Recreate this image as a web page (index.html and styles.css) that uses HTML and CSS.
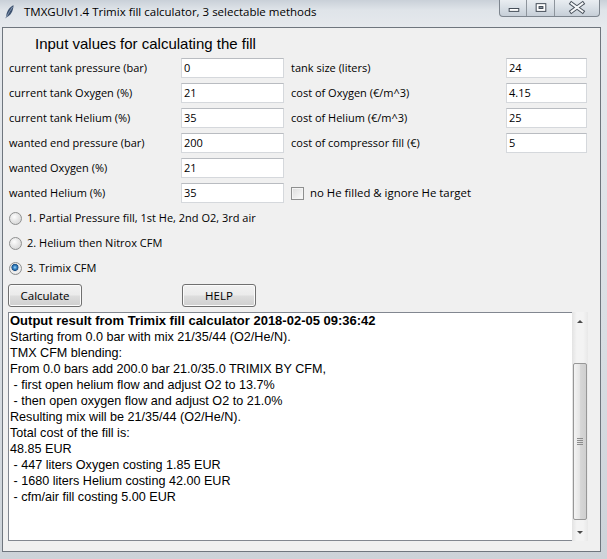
FILE: index.html
```html
<!DOCTYPE html>
<html>
<head>
<meta charset="utf-8">
<title>TMXGUIv1.4</title>
<link rel="stylesheet" href="styles.css">
</head>
<body>
<div class="window">
  <div class="titlebar">
    <svg class="app-icon" width="9" height="14" viewBox="0 0 9 14">
      <path d="M8.6 0.3 C5.2 1.6 1.8 5.4 1.2 11.2 L0.4 13.6 L1.6 12.2 C5.4 10.8 8.2 6.6 8.6 0.3 Z" fill="#3d5270"/>
      <path d="M7.6 2 C5.4 5 3.4 8.2 1.4 12" stroke="#9fb2c8" stroke-width="0.7" fill="none"/>
    </svg>
    <span class="title">TMXGUIv1.4 Trimix fill calculator, 3 selectable methods</span>
    <div class="caption">
      <div class="cbtn cbtn-min">
        <svg width="27" height="16" viewBox="0 0 27 16"><rect x="9.5" y="8.5" width="10" height="3" fill="#fff" stroke="#3f4853"/></svg>
      </div>
      <div class="cbtn cbtn-max">
        <svg width="28" height="16" viewBox="0 0 28 16"><rect x="9.5" y="3.5" width="10" height="8" fill="#fff" stroke="#3f4853"/><rect x="12.5" y="6.5" width="4" height="2" fill="#8d96a1" stroke="#3f4853"/></svg>
      </div>
      <div class="cbtn cbtn-close">
        <svg width="44" height="16" viewBox="0 0 44 16"><path d="M16.5 3.5 L27.5 11.5 M27.5 3.5 L16.5 11.5" stroke="#4a525c" stroke-width="4" stroke-linecap="square"/><path d="M16.5 3.5 L27.5 11.5 M27.5 3.5 L16.5 11.5" stroke="#f4f6f8" stroke-width="2" stroke-linecap="square"/></svg>
      </div>
    </div>
  </div>
  <div class="client">
    <div class="heading">Input values for calculating the fill</div>
    <div class="form">
      <div class="label">current tank pressure (bar)</div>
      <div class="cell"><div class="entry">0</div></div>
      <div class="label">tank size (liters)</div>
      <div class="cell"><div class="entry entry-narrow">24</div></div>

      <div class="label">current tank Oxygen (%)</div>
      <div class="cell"><div class="entry">21</div></div>
      <div class="label">cost of Oxygen (€/m^3)</div>
      <div class="cell"><div class="entry entry-narrow">4.15</div></div>

      <div class="label">current tank Helium (%)</div>
      <div class="cell"><div class="entry">35</div></div>
      <div class="label">cost of Helium (€/m^3)</div>
      <div class="cell"><div class="entry entry-narrow">25</div></div>

      <div class="label">wanted end pressure (bar)</div>
      <div class="cell"><div class="entry">200</div></div>
      <div class="label">cost of compressor fill (€)</div>
      <div class="cell"><div class="entry entry-narrow">5</div></div>

      <div class="label">wanted Oxygen (%)</div>
      <div class="cell"><div class="entry">21</div></div>
      <div class="span-right"></div>

      <div class="label">wanted Helium (%)</div>
      <div class="cell"><div class="entry">35</div></div>
      <div class="span-right check-row"><span class="checkbox"></span><span class="label check-label">no He filled &amp; ignore He target</span></div>
    </div>
    <div class="radios">
      <div class="radio-row"><span class="radio"></span><span class="label">1. Partial Pressure fill, 1st He, 2nd O2, 3rd air</span></div>
      <div class="radio-row"><span class="radio"></span><span class="label">2. Helium then Nitrox CFM</span></div>
      <div class="radio-row"><span class="radio radio-on"></span><span class="label">3. Trimix CFM</span></div>
    </div>
    <div class="buttons">
      <div class="btn">Calculate</div>
      <div class="btn btn-help">HELP</div>
    </div>
    <div class="output-wrap">
      <div class="output"><b>Output result from Trimix fill calculator 2018-02-05 09:36:42</b>
Starting from 0.0 bar with mix 21/35/44 (O2/He/N).
TMX CFM blending:
From 0.0 bars add 200.0 bar 21.0/35.0 TRIMIX BY CFM,
 - first open helium flow and adjust O2 to 13.7%
 - then open oxygen flow and adjust O2 to 21.0%
Resulting mix will be 21/35/44 (O2/He/N).
Total cost of the fill is:
48.85 EUR
 - 447 liters Oxygen costing 1.85 EUR
 - 1680 liters Helium costing 42.00 EUR
 - cfm/air fill costing 5.00 EUR</div>
      <div class="scrollbar">
        <div class="sb-arrow"><svg width="16" height="18" viewBox="0 0 16 18"><path d="M5 11 L8 8 L11 11 Z" fill="#4a4a4a"/></svg></div>
        <div class="sb-track-top"></div>
        <div class="sb-thumb"><span class="grip"></span><span class="grip"></span><span class="grip"></span><span class="grip"></span></div>
        <div class="sb-track-bottom"></div>
        <div class="sb-arrow"><svg width="16" height="18" viewBox="0 0 16 18"><path d="M5 8 L8 11 L11 8 Z" fill="#4a4a4a"/></svg></div>
      </div>
    </div>
  </div>
</div>
</body>
</html>
```
FILE: styles.css
```css
html, body {
  margin: 0;
  padding: 0;
}
body {
  width: 607px;
  height: 559px;
  overflow: hidden;
  font-family: "Open Sans", "Noto Sans", sans-serif;
  font-size: 11px;
  color: #000;
}
.window {
  width: 607px;
  height: 559px;
  box-sizing: border-box;
  padding: 0 6px 7px 2px;
  display: flex;
  flex-direction: column;
  background: linear-gradient(to bottom, #c9d0d8 0px, #dfe4e9 10px, #e6e9ed 27px, #d9dee3 60%, #cdd3d9 100%);
}
.titlebar {
  height: 27px;
  flex: none;
  display: flex;
  align-items: flex-start;
}
.app-icon {
  margin: 5px 0 0 3px;
  flex: none;
}
.title {
  margin: 4px 0 0 10px;
  line-height: 16px;
  font-size: 11.5px;
  color: #000;
  white-space: nowrap;
}
.caption {
  margin-left: auto;
  margin-right: 1px;
  display: flex;
  height: 16px;
  border: 1px solid #7d858e;
  border-top: none;
  border-radius: 0 0 4px 4px;
  overflow: hidden;
  background: linear-gradient(to bottom, #e9edf1, #d6dde4 55%, #c6ced7);
}
.cbtn {
  height: 16px;
  display: flex;
}
.cbtn-min { width: 26px; border-right: 1px solid #8d949c; }
.cbtn-max { width: 27px; border-right: 1px solid #8d949c; }
.cbtn-close { width: 44px; }
.client {
  flex: 1;
  border: 1px solid #6f767e;
  background: #f0f0f0;
  display: flex;
  flex-direction: column;
}
.heading {
  padding: 6px 0 4px 32px;
  height: 20px;
  line-height: 20px;
  font-family: "Liberation Sans", Arial, sans-serif;
  font-size: 15px;
}
.form {
  display: grid;
  grid-template-columns: 172px 110px 215px 81px;
  grid-auto-rows: 20px;
  row-gap: 5px;
  padding-left: 6px;
  align-items: center;
}
.label {
  white-space: nowrap;
  line-height: 16px;
}
.check-label {
  font-size: 11.4px;
}
.cell {
  height: 20px;
}
.entry {
  box-sizing: border-box;
  width: 103px;
  height: 20px;
  background: #fff;
  border: 1px solid #d5d8dc;
  border-top-color: #b9bcc1;
  padding-left: 2px;
  line-height: 18px;
}
.entry-narrow {
  width: 81px;
}
.span-right {
  grid-column: 3 / 5;
  height: 20px;
}
.check-row {
  display: flex;
  align-items: center;
}
.checkbox {
  box-sizing: border-box;
  width: 13px;
  height: 13px;
  border: 1px solid #8e8f8f;
  background: linear-gradient(135deg, #dcdcdc, #fbfbfb);
  box-shadow: inset 0 0 0 1px #f4f4f4;
  margin-right: 6px;
}
.radios {
  margin-top: 5px;
  padding-left: 6px;
  display: flex;
  flex-direction: column;
  gap: 5px;
}
.radio-row {
  height: 20px;
  display: flex;
  align-items: center;
}
.radio {
  box-sizing: border-box;
  width: 13px;
  height: 13px;
  border-radius: 50%;
  border: 1px solid #8e8f8f;
  background: radial-gradient(circle at 40% 35%, #fdfdfd 0, #e6e6e6 45%, #cfcfcf 100%);
  margin-right: 5px;
}
.radio-on {
  background: radial-gradient(circle at 45% 40%, #a9d9f6 0, #3f8fd0 1.5px, #1a4f86 3.2px, #dcdcdc 3.8px, #f2f2f2 5px, #d0d0d0 100%);
}
.buttons {
  margin-top: 6px;
  padding-left: 5px;
  display: flex;
  height: 23px;
}
.btn {
  box-sizing: border-box;
  width: 74px;
  height: 23px;
  border: 1px solid #707070;
  border-radius: 3px;
  background: linear-gradient(to bottom, #f2f2f2 0%, #ebebeb 48%, #dddddd 52%, #cfcfcf 100%);
  box-shadow: inset 0 0 0 1px #fbfbfb;
  text-align: center;
  line-height: 21px;
  font-size: 11.5px;
}
.btn-help {
  margin-left: 100px;
}
.output-wrap {
  margin: 5px 0 0 5px;
  display: flex;
  height: 229px;
  width: 580px;
}
.output {
  box-sizing: border-box;
  width: 564px;
  height: 229px;
  background: #fff;
  border: 1px solid #828790;
  border-right: none;
  padding: 0 0 0 1px;
  font-family: "Liberation Sans", Arial, sans-serif;
  font-size: 12.6px;
  line-height: 16px;
  white-space: pre;
  overflow: hidden;
}
.output b {
  font-weight: bold;
  font-size: 13px;
}
.scrollbar {
  width: 16px;
  height: 229px;
  display: flex;
  flex-direction: column;
  background: linear-gradient(to right, #e3e3e3, #f3f3f3 30%, #f3f3f3 70%, #e8e8e8);
}
.sb-arrow {
  height: 18px;
  flex: none;
}
.sb-track-top {
  height: 33px;
  flex: none;
}
.sb-thumb {
  box-sizing: border-box;
  height: 157px;
  flex: none;
  margin: 0 1px;
  border: 1px solid #979797;
  border-radius: 2px;
  background: linear-gradient(to right, #f3f3f3, #e6e6e6 45%, #d6d6d6 55%, #cfcfcf);
  display: flex;
  flex-direction: column;
  align-items: center;
  justify-content: center;
  gap: 1px;
}
.grip {
  width: 6px;
  height: 1px;
  background: #8c8c8c;
}
.sb-track-bottom {
  flex: 1;
}
```
